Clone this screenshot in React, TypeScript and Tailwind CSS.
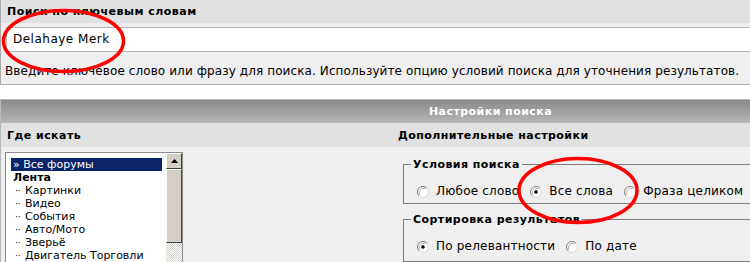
import React from "react";

function Radio({ checked }: { checked?: boolean }) {
  return (
    <svg width="12" height="12" viewBox="0 0 12 12" className="shrink-0">
      <circle cx="6" cy="6" r="5.5" fill="#ffffff" />
      <path d="M 2.1 9.9 A 5.5 5.5 0 0 1 9.9 2.1" fill="none" stroke="#7a7a7a" strokeWidth="1" />
      <path d="M 9.9 2.1 A 5.5 5.5 0 0 1 2.1 9.9" fill="none" stroke="#d8d8d8" strokeWidth="1" />
      <path d="M 2.9 8.6 A 4.2 4.2 0 0 1 8.6 2.9" fill="none" stroke="#b0b0b0" strokeWidth="1" />
      {checked && <circle cx="6" cy="6" r="1.8" fill="#000000" />}
    </svg>
  );
}

function Opt({ checked, label, last }: { checked?: boolean; label: string; last?: boolean }) {
  return (
    <div className={"flex items-center gap-[7px] " + (last ? "" : "mr-[11px]")}>
      <Radio checked={checked} />
      <span>{label}</span>
    </div>
  );
}

const items: { t: string; bold?: boolean; sub?: boolean; sel?: boolean }[] = [
  { t: "» Все форумы", sel: true },
  { t: "Лента", bold: true },
  { t: "Картинки", sub: true },
  { t: "Видео", sub: true },
  { t: "События", sub: true },
  { t: "Авто/Мото", sub: true },
  { t: "Зверьё", sub: true },
  { t: "Двигатель Торговли", sub: true },
];

export default function App() {
  return (
    <div
      className="relative w-[750px] h-[262px] overflow-hidden bg-white text-black text-[11px] leading-[13px]"
      style={{ fontFamily: '"DejaVu Sans", Verdana, sans-serif' }}
    >
      <div className="w-[980px]">
        {/* Top panel */}
        <div className="bg-[#efefef] border-l border-b border-[#a9a9a9]">
          <div className="h-[23px] bg-[#e1e1e1] flex items-center pl-[6px] font-bold tracking-[0.5px]">
            Поиск по ключевым словам
          </div>
          <div className="pt-[4px] pl-[5px]">
            <div className="h-[25px] bg-white border border-[#b4b4b4] flex items-center pl-[6px] text-[12px] tracking-[0.5px]">
              Delahaye Merk
            </div>
          </div>
          <div className="h-[32px] pl-[4px] pt-[13px] text-[12px] tracking-[0.1px] whitespace-nowrap">
            Введите ключевое слово или фразу для поиска. Используйте опцию условий поиска для уточнения результатов.
          </div>
        </div>

        <div className="h-[14px]" />

        {/* Settings panel */}
        <div className="border-t border-l border-[#b9b9b9] bg-[#efefef]">
          <div className="h-[23px] bg-gradient-to-b from-[#8b8b8b] to-[#b6b6b6] flex items-center justify-center text-white font-bold tracking-[0.45px]">
            Настройки поиска
          </div>
          <div className="grid grid-cols-[392px_1fr]">
            <div className="h-[24px] bg-[#e1e1e1] flex items-center pl-[6px] font-bold tracking-[0.45px]">Где искать</div>
            <div className="h-[24px] bg-[#e1e1e1] flex items-center pl-[5px] font-bold tracking-[0.45px]">Дополнительные настройки</div>

            {/* left: listbox */}
            <div className="pt-[5px] pl-[4px]">
              <div className="w-[178px] h-[130px] flex bg-white border border-[#8c8c8c]">
                <div className="flex-1 pt-[5px] pl-[5px] pr-[4px] overflow-hidden">
                  {items.map((it) => (
                    <div
                      key={it.t}
                      className={
                        "h-[13px] whitespace-nowrap " +
                        (it.sel ? "bg-[#0a246a] text-white pl-[2px] " : "pl-[2px] ") +
                        (it.bold ? "font-bold" : "")
                      }
                    >
                      {it.sub ? (
                        <span>
                          <span className="inline-block w-[12px] pl-[2px] text-[9px]">··</span>
                          {it.t}
                        </span>
                      ) : (
                        it.t
                      )}
                    </div>
                  ))}
                </div>
                <div className="w-[16px] flex flex-col bg-[repeating-conic-gradient(#d4d0c8_0%_25%,#ffffff_0%_50%)] bg-[length:2px_2px]">
                  <div className="h-[16px] bg-[#d4d0c8] border-t border-l border-t-white border-l-white border-r border-b border-r-[#404040] border-b-[#404040] flex items-center justify-center">
                    <svg width="7" height="4" viewBox="0 0 7 4">
                      <path d="M3.5 0 L7 4 L0 4 Z" fill="#000" />
                    </svg>
                  </div>
                  <div className="h-[74px] bg-[#d4d0c8] border-t border-l border-t-white border-l-white border-r border-b border-r-[#404040] border-b-[#404040]" />
                </div>
              </div>
            </div>

            {/* right: options */}
            <div className="pl-[10px] pt-[11px] text-[12px] tracking-[0.2px]">
              <fieldset className="border border-[#7d7d7d] pt-[14px] pb-[5px]">
                <legend className="font-bold ml-[7px] px-[2px] text-[11px] tracking-[0.45px]">Условия поиска</legend>
                <div className="h-[13px] pl-[13px] flex items-center whitespace-nowrap">
                  <Opt label="Любое слово" />
                  <Opt checked label="Все слова" />
                  <Opt label="Фраза целиком" />
                  <Opt label="Логический" last />
                </div>
              </fieldset>
              <fieldset className="mt-[9px] border border-[#7d7d7d] pt-[14px] pb-[8px]">
                <legend className="font-bold ml-[7px] px-[2px] text-[11px] tracking-[0.45px]">Сортировка результатов</legend>
                <div className="h-[13px] pl-[13px] flex items-center whitespace-nowrap">
                  <Opt checked label="По релевантности" />
                  <Opt label="По дате" last />
                </div>
              </fieldset>
            </div>
          </div>
        </div>
      </div>

      {/* red annotation ellipses */}
      <svg className="absolute left-0 top-0 pointer-events-none" width="750" height="262">
        <ellipse cx="63.5" cy="41" rx="60" ry="30.5" fill="none" stroke="#ff0000" strokeWidth="3.5" />
        <ellipse cx="578" cy="190.5" rx="59" ry="32" fill="none" stroke="#ff0000" strokeWidth="3.5" />
      </svg>
    </div>
  );
}
